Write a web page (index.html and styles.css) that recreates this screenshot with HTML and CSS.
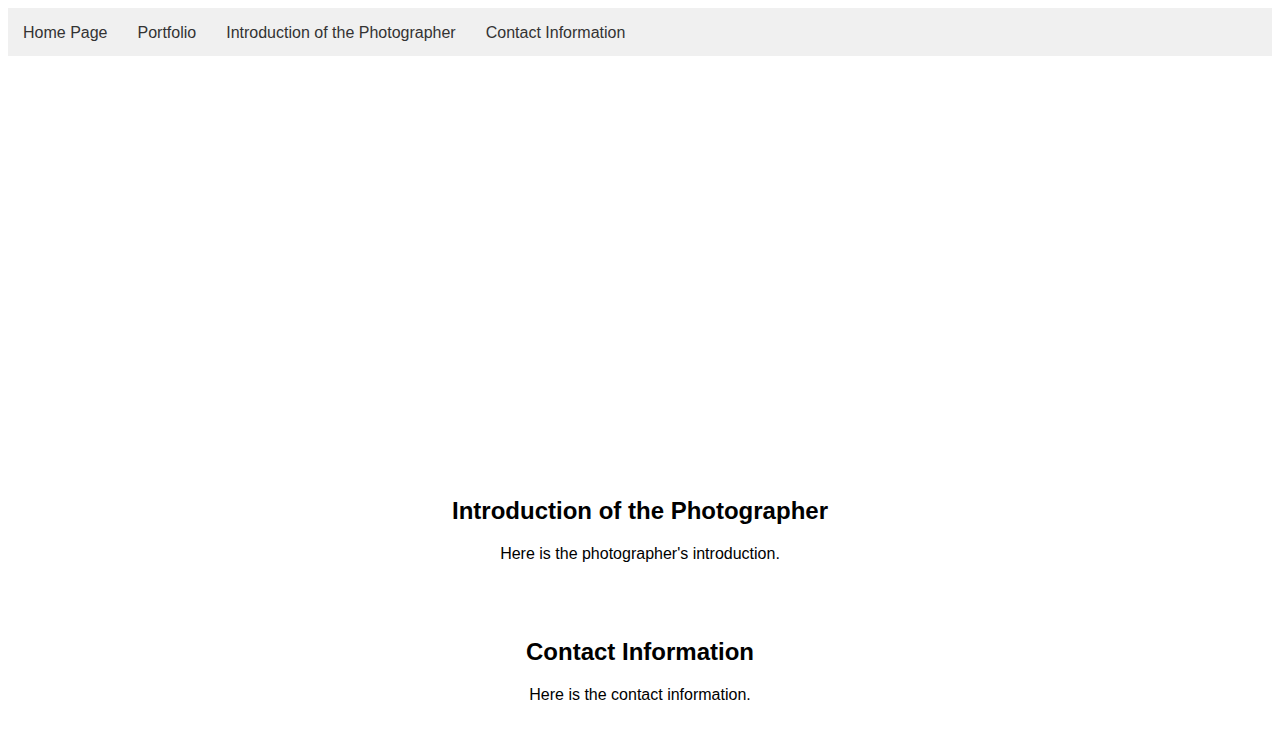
FILE: index.html
```html
<!DOCTYPE html>
<html lang="en">
<head>
<meta charset="utf-8">
<title>Photographer</title>
<link rel="stylesheet" href="styles.css">
</head>
<body>
<nav class="nav">
  <ul class="nav-list">
    <li><a class="nav-link" href="#home">Home Page</a></li>
    <li><a class="nav-link" href="#portfolio">Portfolio</a></li>
    <li><a class="nav-link" href="#intro">Introduction of the Photographer</a></li>
    <li><a class="nav-link" href="#contact">Contact Information</a></li>
  </ul>
</nav>
<section class="portfolio" id="portfolio">
  <div class="gallery"></div>
</section>
<section class="section" id="intro">
  <h2 class="section-title">Introduction of the Photographer</h2>
  <p class="section-text">Here is the photographer's introduction.</p>
</section>
<section class="section" id="contact">
  <h2 class="section-title">Contact Information</h2>
  <p class="section-text">Here is the contact information.</p>
</section>
</body>
</html>
```
FILE: styles.css
```css
body {
  margin: 8px;
  font-family: "Liberation Sans", Arial, sans-serif;
  color: #000;
  background: #fff;
}
.nav-list {
  list-style: none;
  margin: 0;
  padding: 0;
  display: flex;
  background: #f0f0f0;
}
.nav-link {
  display: block;
  padding: 16px 15px 14px;
  font-size: 16px;
  line-height: 18.4px;
  color: #333;
  text-decoration: none;
}
.portfolio {
  padding: 20px;
}
.gallery {
  height: 360.5px;
}
.section {
  padding: 20px 20px 18px;
  text-align: center;
}
.section-title {
  font-size: 24px;
  line-height: 27.6px;
  margin: 19.92px 0 20.92px;
}
.section-text {
  font-size: 16px;
  line-height: 18.4px;
  margin: 16px 0;
}
```
